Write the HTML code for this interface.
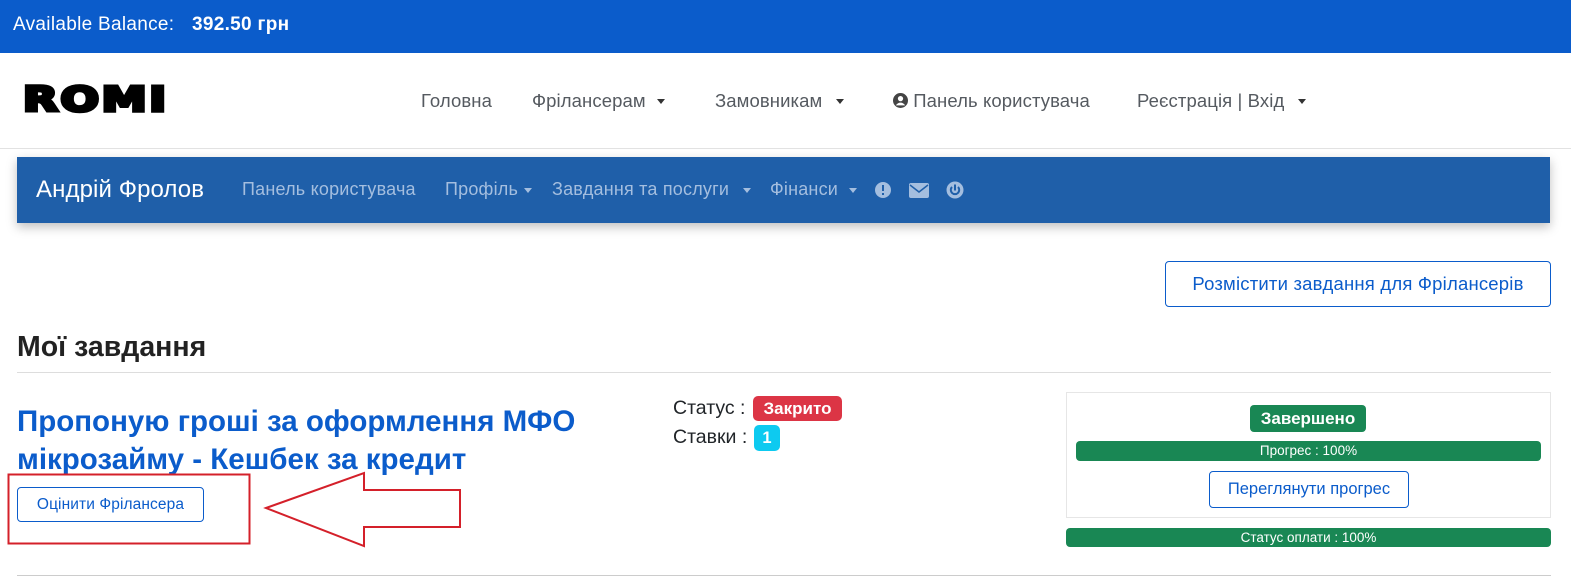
<!DOCTYPE html>
<html><head><meta charset="utf-8"><style>
*{box-sizing:border-box;margin:0;padding:0}
body{width:1571px;height:583px;overflow:hidden;background:#fff;font-family:"Liberation Sans",sans-serif;position:relative;color:#212529}
.abs{position:absolute;white-space:nowrap}
.top{position:absolute;left:0;top:0;width:1571px;height:53px;background:#0b5ccb;color:#fff;font-size:19px;letter-spacing:0.3px}
.nav a{position:absolute;top:90px;font-size:18.5px;color:#555a60;letter-spacing:0.1px}
.c{position:absolute;width:0;height:0;border-left:4px solid transparent;border-right:4px solid transparent;border-top:5px solid #333}
.bar2{position:absolute;left:17px;top:157px;width:1533px;height:66px;background:#1f5fa9;box-shadow:0 4px 10px rgba(0,0,0,.25)}
.bar2 .l{position:absolute;top:22px;font-size:18px;letter-spacing:0.2px;color:#a4bedf}
.bar2 .c{border-top-color:#a4bedf;top:31px}
.btn{position:absolute;border:1px solid #0b5ccb;border-radius:4px;color:#0b5ccb;background:#fff;text-align:center}
.prog{position:absolute;background:#198754;color:#fff;border-radius:4px;font-size:13.5px;text-align:center}
</style></head><body>
<div class="top"><span class="abs" style="left:13px;top:14px">Available Balance:</span><span class="abs" style="left:192px;top:14px;font-weight:bold">392.50 грн</span></div>
<div class="abs" style="left:23px;top:80px;height:40px;font-family:'DejaVu Sans';font-weight:900;font-size:34px;color:#000;-webkit-text-stroke:3.5px #000;line-height:40px;letter-spacing:2px;transform:scaleX(1.33);transform-origin:left">ROMI</div>
<div class="nav">
<a class="abs" style="left:421px">Головна</a>
<a class="abs" style="left:532px">Фрілансерам</a><span class="c" style="left:657px;top:99px"></span>
<a class="abs" style="left:715px">Замовникам</a><span class="c" style="left:836px;top:99px"></span>
<a class="abs" style="left:893px"><svg width="15" height="15" viewBox="0 0 16 16" style="vertical-align:-1px"><circle cx="8" cy="8" r="8" fill="#444"/><circle cx="8" cy="6" r="2.8" fill="#fff"/><path d="M3 13.2c1.2-2 3-3 5-3s3.8 1 5 3" fill="#fff"/></svg> Панель користувача</a>
<a class="abs" style="left:1137px">Реєстрація | Вхід</a><span class="c" style="left:1298px;top:99px"></span>
</div>
<div class="abs" style="left:0;top:148px;width:1571px;height:1px;background:#e2e2e2"></div>
<div class="bar2">
<span class="abs" style="left:19px;top:19px;font-size:24px;letter-spacing:0.1px;color:#fff">Андрій Фролов</span>
<span class="l abs" style="left:225px">Панель користувача</span>
<span class="l abs" style="left:428px">Профіль</span><span class="c" style="left:507px"></span>
<span class="l abs" style="left:535px">Завдання та послуги</span><span class="c" style="left:726px"></span>
<span class="l abs" style="left:753px">Фінанси</span><span class="c" style="left:832px"></span>
<svg class="abs" style="left:857px;top:24px" width="18" height="18" viewBox="0 0 18 18"><circle cx="9" cy="9" r="8" fill="#a4bedf"/><rect x="8" y="4" width="2" height="6" fill="#1f5fa9"/><rect x="8" y="12" width="2" height="2" fill="#1f5fa9"/></svg>
<svg class="abs" style="left:892px;top:26px" width="20" height="15" viewBox="0 0 20 15"><rect width="20" height="15" rx="2" fill="#a4bedf"/><path d="M1 2l9 7 9-7" stroke="#1f5fa9" stroke-width="1.5" fill="none"/></svg>
<svg class="abs" style="left:929px;top:24px" width="18" height="18" viewBox="0 0 18 18"><circle cx="9" cy="9" r="8.5" fill="#a4bedf"/><path d="M6 6a4.2 4.2 0 1 0 6 0" stroke="#1f5fa9" stroke-width="2" fill="none"/><rect x="8" y="3.5" width="2" height="6" fill="#1f5fa9"/></svg>
</div>
<div class="btn" style="left:1165px;top:261px;width:386px;height:46px;font-size:18.5px;letter-spacing:0.2px;line-height:44px">Розмістити завдання для Фрілансерів</div>
<div class="abs" style="left:17px;top:331px;font-size:28.5px;font-weight:bold;color:#222">Мої завдання</div>
<div class="abs" style="left:17px;top:372px;width:1534px;height:1px;background:#ddd"></div>
<div class="abs" style="left:17px;top:403px;font-size:29.5px;font-weight:bold;color:#0b5ccb;line-height:38px">Пропоную гроші за оформлення МФО<br>мікрозайму - Кешбек за кредит</div>
<div class="btn" style="left:17px;top:487px;width:187px;height:35px;font-size:15.5px;letter-spacing:0.1px;line-height:33px">Оцінити Фрілансера</div>
<svg class="abs" style="left:0;top:460px" width="480" height="100"><rect x="8.5" y="14.5" width="241" height="69" fill="none" stroke="#d4202a" stroke-width="2"/><polygon points="266,48 364,13 364,30 460,30 460,67 364,67 364,86" fill="none" stroke="#d4202a" stroke-width="2"/></svg>
<div class="abs" style="left:673px;top:397px;font-size:19.5px">Статус :</div>
<div class="abs" style="left:753px;top:396px;width:89px;height:25px;background:#dc3545;color:#fff;font-weight:bold;font-size:17px;line-height:25px;text-align:center;border-radius:5px">Закрито</div>
<div class="abs" style="left:673px;top:426px;font-size:19.5px">Ставки :</div>
<div class="abs" style="left:754px;top:425px;width:26px;height:26px;background:#0dcaf0;color:#fff;font-weight:bold;font-size:16.5px;line-height:26px;text-align:center;border-radius:5px">1</div>
<div class="abs" style="left:1066px;top:392px;width:485px;height:126px;border:1px solid #e6e6e6"></div>
<div class="abs" style="left:1250px;top:405px;width:116px;height:27px;background:#198754;color:#fff;font-weight:bold;font-size:17px;line-height:27px;text-align:center;border-radius:4px">Завершено</div>
<div class="prog" style="left:1076px;top:441px;width:465px;height:20px;line-height:20px">Прогрес : 100%</div>
<div class="btn" style="left:1209px;top:471px;width:200px;height:37px;font-size:16.5px;line-height:35px">Переглянути прогрес</div>
<div class="prog" style="left:1066px;top:528px;width:485px;height:19px;line-height:19px">Статус оплати : 100%</div>
<div class="abs" style="left:17px;top:575px;width:1534px;height:1px;background:#ccc"></div>
</body></html>
